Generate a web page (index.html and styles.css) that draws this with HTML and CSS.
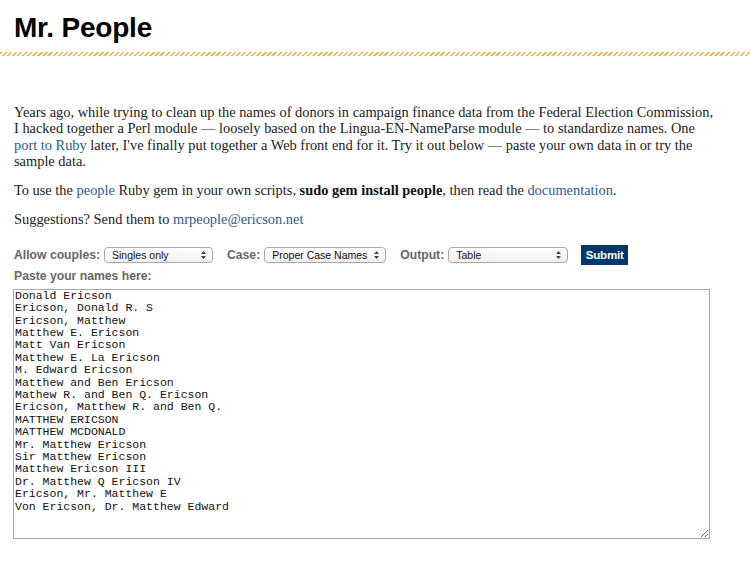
FILE: index.html
```html
<!DOCTYPE html>
<html>
<head>
<meta charset="utf-8">
<title>Mr. People</title>
<link rel="stylesheet" href="styles.css">
</head>
<body>
<header class="masthead">
  <h1 class="title">Mr. People</h1>
</header>
<div class="hatch"></div>
<main class="content">
  <p class="para">Years ago, while trying to clean up the names of donors in campaign finance data from the Federal Election Commission, I hacked together a Perl module — loosely based on the Lingua-EN-NameParse module — to standardize names. One <a href="#">port to Ruby</a> later, I've finally put together a Web front end for it. Try it out below — paste your own data in or try the sample data.</p>
  <p class="para">To use the <a href="#">people</a> Ruby gem in your own scripts, <strong>sudo gem install people</strong>, then read the <a href="#">documentation</a>.</p>
  <p class="para">Suggestions? Send them to <a href="#">mrpeople@ericson.net</a></p>

  <form class="form">
    <div class="controls">
      <div class="field">
        <label class="label">Allow couples:</label>
        <span class="select-wrap w-couples">
          <select class="select"><option>Singles only</option><option>Allow couples</option></select>
          <svg class="arrows" width="5" height="8" viewBox="0 0 5 8"><path d="M2.5 0 L5 3 L0 3 Z M0 5 L5 5 L2.5 8 Z" fill="#444"/></svg>
        </span>
      </div>
      <div class="field">
        <label class="label">Case:</label>
        <span class="select-wrap w-case">
          <select class="select"><option>Proper Case Names</option><option>Leave as is</option></select>
          <svg class="arrows" width="5" height="8" viewBox="0 0 5 8"><path d="M2.5 0 L5 3 L0 3 Z M0 5 L5 5 L2.5 8 Z" fill="#444"/></svg>
        </span>
      </div>
      <div class="field">
        <label class="label">Output:</label>
        <span class="select-wrap w-output">
          <select class="select"><option>Table</option><option>CSV</option></select>
          <svg class="arrows" width="5" height="8" viewBox="0 0 5 8"><path d="M2.5 0 L5 3 L0 3 Z M0 5 L5 5 L2.5 8 Z" fill="#444"/></svg>
        </span>
      </div>
      <button type="button" class="submit">Submit</button>
    </div>
    <label class="label paste-label">Paste your names here:</label>
    <textarea class="names" spellcheck="false">Donald Ericson
Ericson, Donald R. S
Ericson, Matthew
Matthew E. Ericson
Matt Van Ericson
Matthew E. La Ericson
M. Edward Ericson
Matthew and Ben Ericson
Mathew R. and Ben Q. Ericson
Ericson, Matthew R. and Ben Q.
MATTHEW ERICSON
MATTHEW MCDONALD
Mr. Matthew Ericson
Sir Matthew Ericson
Matthew Ericson III
Dr. Matthew Q Ericson IV
Ericson, Mr. Matthew E
Von Ericson, Dr. Matthew Edward</textarea>
  </form>
</main>
</body>
</html>
```
FILE: styles.css
```css
html, body {
  margin: 0;
  padding: 0;
  background: #fff;
}

body {
  font-family: "Liberation Serif", "Times New Roman", serif;
  color: #222;
}

.masthead {
  padding: 12px 14px 0;
}

.title {
  margin: 0;
  font-family: "Liberation Sans", Arial, sans-serif;
  font-weight: bold;
  font-size: 28px;
  line-height: 32px;
  color: #000;
  letter-spacing: -0.2px;
}

.hatch {
  margin-top: 8px;
  height: 4px;
  background: repeating-linear-gradient(135deg, #f2c76a 0, #e8b040 1.6px, #fff 1.8px, #fff 3.6px);
}

.content {
  padding: 48px 14px 0;
}

.para {
  margin: 0 0 13px;
  font-size: 14.4px;
  line-height: 16.3px;
  max-width: 705px;
}

.para a {
  color: #2a5d8f;
  text-decoration: none;
}

.para strong {
  color: #111;
}

.form {
  margin: 17px 0 0;
}

.controls {
  display: flex;
  align-items: center;
  height: 20px;
}

.field {
  display: flex;
  align-items: center;
  gap: 4px;
  margin-right: 14px;
}

.label {
  font-family: "Liberation Sans", Arial, sans-serif;
  font-weight: bold;
  font-size: 12.2px;
  color: #666;
}

.select-wrap {
  position: relative;
  display: inline-block;
  height: 16px;
}

.select {
  appearance: none;
  -webkit-appearance: none;
  box-sizing: border-box;
  width: 100%;
  height: 16px;
  margin: 0;
  padding: 0 14px 0 7px;
  border: 1px solid #a9a9a9;
  border-radius: 4px;
  background: linear-gradient(#ffffff, #f0f0f0);
  font-family: "Liberation Sans", Arial, sans-serif;
  font-size: 10.5px;
  line-height: 14px;
  color: #111;
  display: block;
}

.w-couples { width: 109px; }
.w-case { width: 122px; }
.w-output { width: 120px; }

.arrows {
  position: absolute;
  right: 7px;
  top: 4px;
  pointer-events: none;
}

.submit {
  margin-left: -1px;
  box-sizing: border-box;
  width: 47px;
  height: 20px;
  padding: 0;
  border: none;
  background: #003869;
  color: #fff;
  font-family: "Liberation Sans", Arial, sans-serif;
  font-weight: bold;
  font-size: 11.5px;
  letter-spacing: -0.2px;
}

.paste-label {
  display: block;
  margin-top: 3px;
  line-height: 16px;
}

.names {
  display: block;
  box-sizing: border-box;
  width: 697px;
  height: 250px;
  margin: 5px 0 0 -1px;
  padding: 0 1px;
  border: 1px solid #a8a8a8;
  font-family: "Liberation Mono", "Courier New", monospace;
  font-size: 11.5px;
  line-height: 12.4px;
  color: #111;
  resize: both;
  outline: none;
}
```
